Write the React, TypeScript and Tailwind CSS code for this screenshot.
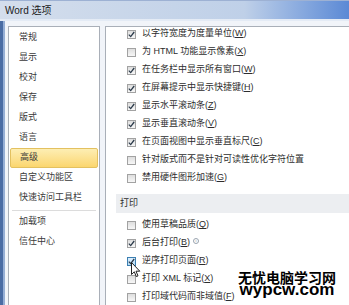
import React from 'react';

const font = { fontFamily: '"Liberation Sans", "Noto Sans CJK SC", sans-serif' };

const navItems = ['常规', '显示', '校对', '保存', '版式', '语言', '高级', '自定义功能区', '快速访问工具栏'];

interface Row {
    label: string;
    key?: string;
    checked: boolean;
    hover?: boolean;
    info?: boolean;
}

const displayRows: Row[] = [
    { label: '以字符宽度为度量单位', key: 'W', checked: true },
    { label: '为 HTML 功能显示像素', key: 'X', checked: false },
    { label: '在任务栏中显示所有窗口', key: 'W', checked: true },
    { label: '在屏幕提示中显示快捷键', key: 'H', checked: true },
    { label: '显示水平滚动条', key: 'Z', checked: true },
    { label: '显示垂直滚动条', key: 'V', checked: true },
    { label: '在页面视图中显示垂直标尺', key: 'C', checked: true },
    { label: '针对版式而不是针对可读性优化字符位置', checked: false },
    { label: '禁用硬件图形加速', key: 'G', checked: false },
];

const printRows: Row[] = [
    { label: '使用草稿品质', key: 'Q', checked: false },
    { label: '后台打印', key: 'B', checked: true, info: true },
    { label: '逆序打印页面', key: 'R', checked: true, hover: true },
    { label: '打印 XML 标记', key: 'X', checked: false },
    { label: '打印域代码而非域值', key: 'F', checked: false },
];

function CheckBox({ checked, hover }: { checked: boolean; hover?: boolean }) {
    return (
        <div
            className={
                'w-[9px] h-[9px] shrink-0 border flex items-center justify-center ' +
                (hover
                    ? 'border-[#3c7fb1] bg-linear-to-b from-[#dcefff] to-[#b6dcf5]'
                    : 'border-[#a2a2a2] bg-linear-to-b from-[#dedede] to-[#f7f7f7]')
            }
        >
            {checked && (
                <svg width="7" height="7" viewBox="0 0 7 7">
                    <path d="M0.8 3.6 L2.7 5.6 L6.2 1" fill="none" stroke="#2b3a4a" strokeWidth="1.3" />
                </svg>
            )}
        </div>
    );
}

function OptionRow({ row }: { row: Row }) {
    return (
        <div className="h-[18px] flex items-center gap-[6px] pl-[11px] text-[9px] text-[#2d2d2d] whitespace-nowrap">
            <CheckBox checked={row.checked} hover={row.hover} />
            <span>
                {row.label}
                {row.key && (
                    <>
                        (<span className="underline">{row.key}</span>)
                    </>
                )}
            </span>
            {row.info && (
                <div className="w-[6px] h-[6px] -ml-[3px] -mt-[4px] rounded-full border border-[#9aa4b0] flex items-center justify-center text-[4px] text-[#7a8591] leading-none">
                    i
                </div>
            )}
        </div>
    );
}

export default function App() {
    return (
        <div className="w-[349px] h-[305px] overflow-hidden relative flex flex-col bg-[#f1f4f9]" style={font}>
            <div className="h-[19px] shrink-0 flex items-center pl-[5px] border-t border-[#9db1d3] bg-linear-to-r from-[#d4deec] via-[#bfd0e8] via-70% to-[#5b89d5] text-[10px] text-[#1c1c1c]">
                Word 选项
            </div>
            <div className="h-[2px] shrink-0 bg-[#e4ebf5]" />
            <div className="flex-1 flex min-h-0">
                <div className="w-[3px] bg-[#4a6ca4]" />
                <div className="w-[2px] bg-[#95aed5]" />
                <div className="flex-1 flex pt-[5px] pl-[3px] gap-[5px] min-w-0">
                    <div className="w-[92px] border border-b-0 border-[#a9afb8] bg-white pt-[1px] flex flex-col">
                        {navItems.map((item) => (
                            <div
                                key={item}
                                className={
                                    'h-[20px] flex items-center text-[9px] whitespace-nowrap ' +
                                    (item === '高级'
                                        ? 'mx-px pl-[9px] rounded-[2px] border border-[#e3c160] bg-linear-to-b from-[#fdeeb3] to-[#fbd66e] text-[#3a3a3a]'
                                        : 'pl-[10px] text-[#3a3a3a]')
                                }
                            >
                                {item}
                            </div>
                        ))}
                        <div className="mx-[3px] mt-[2px] mb-[1px] h-px bg-[#dcdcdc]" />
                        {['加载项', '信任中心'].map((item) => (
                            <div key={item} className="h-[20px] flex items-center pl-[10px] text-[9px] text-[#3a3a3a]">
                                {item}
                            </div>
                        ))}
                    </div>
                    <div className="flex-1 min-w-0 border-l border-t border-[#a9afb8] bg-white overflow-hidden pl-[10px]">
                        <div className="-mt-[2px]">
                            {displayRows.map((row, i) => (
                                <OptionRow key={i} row={row} />
                            ))}
                            <div className="mt-[7px] h-[19px] flex items-center pl-[4px] bg-[#eceef1] text-[9px] text-[#2d2d2d]">
                                打印
                            </div>
                            <div className="mt-[3px]">
                                {printRows.map((row, i) => (
                                    <OptionRow key={i} row={row} />
                                ))}
                            </div>
                        </div>
                    </div>
                </div>
            </div>

            <svg className="absolute left-[131px] top-[262px]" width="10" height="16" viewBox="0 0 10 16">
                <path
                    d="M0.5 0.5 L0.5 12.5 L3.3 9.8 L5.3 14.6 L7 13.9 L5 9.2 L8.8 9.2 Z"
                    fill="white"
                    stroke="#222"
                    strokeWidth="1"
                    strokeLinejoin="round"
                />
            </svg>

            <div className="absolute left-[238px] top-[270px] flex flex-col items-center text-black font-bold">
                <div className="text-[14px] leading-[14px]" style={{ fontFamily: '"Noto Sans CJK SC", sans-serif' }}>
                    无忧电脑学习网
                </div>
                <div className="text-[17px] leading-[12px]" style={{ fontFamily: '"Liberation Sans", sans-serif' }}>
                    wypcw.com
                </div>
            </div>
        </div>
    );
}
